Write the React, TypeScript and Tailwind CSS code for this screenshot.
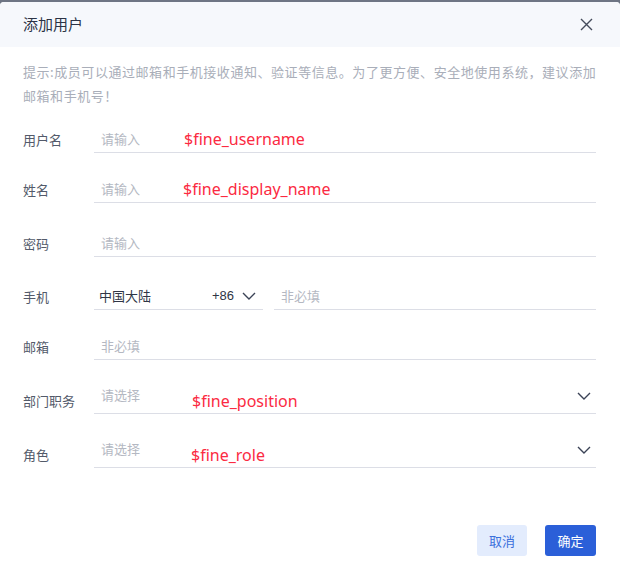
const cjk = { fontFamily: '"Noto Sans CJK SC", "Noto Sans", sans-serif' };
const latin = { fontFamily: '"Noto Sans", "Noto Sans CJK SC", sans-serif' };

function Chevron({ className = "" }: { className?: string }) {
  return (
    <svg width="14" height="8" viewBox="0 0 14 8" fill="none" className={className}>
      <path d="M1 1l6 6 6-6" stroke="#3b4356" strokeWidth="1.4" />
    </svg>
  );
}

function Label({ children }: { children: React.ReactNode }) {
  return <div className="w-[71px] shrink-0 text-[13px] text-[#535a6a]">{children}</div>;
}

function Var({ children, ml }: { children: React.ReactNode; ml: string }) {
  return (
    <span className={`text-[16px] leading-[20px] text-[#fb2a42] ${ml}`} style={latin}>
      {children}
    </span>
  );
}

export default function App() {
  return (
    <div className="w-[620px] h-[565px] bg-[#6e7584] overflow-hidden" style={cjk}>
      <div className="mt-[2px] h-full bg-white rounded-t-[4px] overflow-hidden flex flex-col">
        <div className="h-[45px] shrink-0 bg-[#f6f8fc] flex items-center justify-between pl-[23px] pr-[27px]">
          <span className="text-[15px] text-[#2c3345]">添加用户</span>
          <svg width="13" height="13" viewBox="0 0 13 13">
            <path d="M1 1l11 11M12 1L1 12" stroke="#454c5c" strokeWidth="1.4" />
          </svg>
        </div>

        <div className="px-[23px] pt-[13px] text-[13px] leading-[24px] tracking-[0.55px] text-[#a9aeb9] whitespace-nowrap">
          提示:成员可以通过邮箱和手机接收通知、验证等信息。为了更方便、安全地使用系统，建议添加
          <br />
          邮箱和手机号！
        </div>

        <div className="pl-[23px] pr-[24px] flex flex-col">
          <div className="mt-[18px] flex items-center">
            <Label>用户名</Label>
            <div className="flex-1 h-[27px] border-b border-[#dcdee6] flex items-center pl-[7px] text-[13px] text-[#b4b8c2]">
              请输入
              <Var ml="ml-[44px]">$fine_username</Var>
            </div>
          </div>

          <div className="mt-[23px] flex items-center">
            <Label>姓名</Label>
            <div className="flex-1 h-[27px] border-b border-[#dcdee6] flex items-center pl-[7px] text-[13px] text-[#b4b8c2]">
              请输入
              <Var ml="ml-[43px]">$fine_display_name</Var>
            </div>
          </div>

          <div className="mt-[27px] flex items-center">
            <Label>密码</Label>
            <div className="flex-1 h-[27px] border-b border-[#dcdee6] flex items-center pl-[7px] text-[13px] text-[#b4b8c2]">
              请输入
            </div>
          </div>

          <div className="mt-[26px] flex items-center">
            <Label>手机</Label>
            <div className="w-[169px] h-[27px] border-b border-[#dcdee6] flex items-center pl-[5px] text-[13px] text-[#2f3545]">
              <span className="flex-1">中国大陆</span>
              <span className="text-[13px]" style={{ fontFamily: '"Liberation Sans", sans-serif' }}>
                +86
              </span>
              <Chevron className="ml-[8px] mr-[7px]" />
            </div>
            <div className="ml-[11px] flex-1 h-[27px] border-b border-[#dcdee6] flex items-center pl-[7px] text-[13px] text-[#b4b8c2]">
              非必填
            </div>
          </div>

          <div className="mt-[23px] flex items-center">
            <Label>邮箱</Label>
            <div className="flex-1 h-[27px] border-b border-[#dcdee6] flex items-center pl-[7px] text-[13px] text-[#b4b8c2]">
              非必填
            </div>
          </div>

          <div className="mt-[27px] flex items-center">
            <Label>部门职务</Label>
            <div className="flex-1 h-[27px] border-b border-[#dcdee6] flex items-center pl-[7px] pr-[5px] text-[13px] text-[#b4b8c2]">
              <span className="self-start leading-[14px] mt-[1px]">请选择</span>
              <Var ml="ml-[52px] mt-[1px]">$fine_position</Var>
              <Chevron className="ml-auto mb-[8px]" />
            </div>
          </div>

          <div className="mt-[27px] flex items-center">
            <Label>角色</Label>
            <div className="flex-1 h-[27px] border-b border-[#dcdee6] flex items-center pl-[7px] pr-[5px] text-[13px] text-[#b4b8c2]">
              <span className="self-start leading-[14px] mt-[1px]">请选择</span>
              <Var ml="ml-[51px] mt-[1px]">$fine_role</Var>
              <Chevron className="ml-auto mb-[8px]" />
            </div>
          </div>
        </div>

        <div className="mt-[57px] pr-[24px] flex justify-end gap-[18px] text-[13px]">
          <button className="w-[50px] h-[31px] rounded-[3px] bg-[#e3ecfd] text-[#3a6fdc]">取消</button>
          <button className="w-[51px] h-[31px] rounded-[3px] bg-[#2b5fd8] text-white">确定</button>
        </div>
      </div>
    </div>
  );
}
